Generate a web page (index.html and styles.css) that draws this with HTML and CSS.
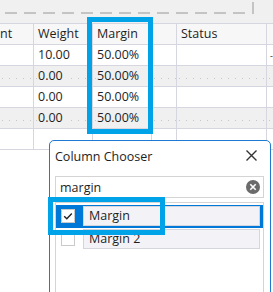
FILE: index.html
```html
<!DOCTYPE html>
<html lang="en">
<head>
  <meta charset="UTF-8" />
  <title>Column Chooser</title>
  <link rel="stylesheet" href="styles.css">
</head>
<body>
  <div class="screen">

    <div class="group-bar">
      <svg class="group-drop" width="273" height="23" viewBox="0 0 273 23">
        <path d="M-4 13 H253 V-2" fill="none" stroke="#c4c4c4" stroke-width="2" stroke-dasharray="12 7" stroke-dashoffset="-9" />
      </svg>
    </div>

    <div class="grid">
      <div class="row head">
        <div class="cell">nt</div>
        <div class="cell">Weight</div>
        <div class="cell">Margin</div>
        <div class="cell"></div>
        <div class="cell">Status</div>
        <div class="cell last"></div>
      </div>
      <div class="row">
        <div class="cell"></div>
        <div class="cell"><span>10.00</span></div>
        <div class="cell"><span>50.00%</span></div>
        <div class="cell"></div>
        <div class="cell"></div>
        <div class="cell last"><span class="tick">-</span></div>
      </div>
      <div class="row alt">
        <div class="cell"></div>
        <div class="cell"><span>0.00</span></div>
        <div class="cell"><span>50.00%</span></div>
        <div class="cell"></div>
        <div class="cell"></div>
        <div class="cell last"></div>
      </div>
      <div class="row">
        <div class="cell"></div>
        <div class="cell"><span>0.00</span></div>
        <div class="cell"><span>50.00%</span></div>
        <div class="cell"></div>
        <div class="cell"></div>
        <div class="cell last"></div>
      </div>
      <div class="row alt">
        <div class="cell"></div>
        <div class="cell"><span>0.00</span></div>
        <div class="cell"><span>50.00%</span></div>
        <div class="cell"></div>
        <div class="cell"></div>
        <div class="cell last"></div>
      </div>
      <div class="row">
        <div class="cell"></div>
        <div class="cell"></div>
        <div class="cell"></div>
        <div class="cell"></div>
        <div class="cell"></div>
        <div class="cell last"></div>
      </div>
    </div>

    <!-- column highlight -->
    <div class="mark mark-col"></div>

    <div class="chooser">
      <div class="chooser-title">
        <span>Column Chooser</span>
        <svg class="close" width="11" height="11" viewBox="0 0 11 11">
          <path d="M0.5 0.5 L10.5 10.5 M10.5 0.5 L0.5 10.5" stroke="#333" stroke-width="1.4" />
        </svg>
      </div>

      <div class="search">
        <span class="search-text">margin</span>
        <svg class="clear" width="14" height="14" viewBox="0 0 14 14">
          <circle cx="7" cy="7" r="7" fill="#6b6b6b" />
          <path d="M4.3 4.3 L9.7 9.7 M9.7 4.3 L4.3 9.7" stroke="#fff" stroke-width="1.6" />
        </svg>
      </div>

      <div class="col-list">
        <div class="col-item selected">
          <div class="check-area">
            <span class="checkbox">
              <svg width="12" height="12" viewBox="0 0 12 12">
                <path d="M2.2 6.2 L4.8 8.8 L9.8 3.4" fill="none" stroke="#222" stroke-width="1.4" />
              </svg>
            </span>
          </div>
          <div class="col-name">Margin</div>
        </div>
        <div class="col-item">
          <div class="check-area">
            <span class="checkbox"></span>
          </div>
          <div class="col-name">Margin 2</div>
        </div>
      </div>
    </div>

    <!-- item highlight -->
    <div class="mark mark-item"></div>

  </div>
</body>
</html>
```

FILE: styles.css
```css
body {
  margin: 0;
  font-family: "Open Sans", "Noto Sans", sans-serif;
  font-size: 12.5px;
  color: #1e1e1e;
}

.screen {
  position: relative;
  width: 273px;
  height: 292px;
  overflow: hidden;
  background: #fff;
}

.group-bar {
  height: 23px;
  background: #f0f0f0;
}

.group-drop {
  display: block;
}

/* grid */
.grid {
  border-top: 1px solid #d6d6e0;
}

.row {
  display: grid;
  grid-template-columns: 34px 59px 59px 25px 90px 1fr;
  height: 21px;
}

.cell {
  box-sizing: border-box;
  height: 21px;
  padding-left: 4px;
  line-height: 20px;
  border-right: 1px solid #d6d6e0;
  border-bottom: 1px solid #d6d6e0;
  white-space: nowrap;
  overflow: hidden;
}

.cell.last {
  border-right: none;
}

.row.head .cell {
  background: #f7f7f7;
}

.row.head .cell:first-child {
  padding-left: 0;
}

.row.alt .cell {
  background-color: #f0f0f0;
  background-image: repeating-linear-gradient(90deg, #c6c6c6 0 1px, transparent 1px 7px);
  background-size: 100% 1px;
  background-repeat: no-repeat;
  background-position: 2px 12px;
}

.row.alt .cell span {
  display: inline-block;
  background: #f0f0f0;
  padding-right: 8px;
}

.tick {
  display: inline-block;
  font-size: 9px;
  line-height: 12px;
  margin-left: -1px;
}

/* annotation boxes */
.mark {
  position: absolute;
  box-sizing: border-box;
  border: 5px solid #00a2e8;
  pointer-events: none;
}

.mark-col {
  left: 87px;
  top: 17px;
  width: 66px;
  height: 117px;
}

.mark-item {
  left: 48px;
  top: 197px;
  width: 117px;
  height: 38px;
}

/* column chooser popup */
.chooser {
  position: absolute;
  left: 49px;
  top: 140px;
  width: 222px;
  height: 170px;
  box-sizing: border-box;
  padding: 0 6px 0 5px;
  background: #fff;
  border: 1px solid #1f7ad2;
  border-radius: 5px 5px 0 0;
}

.chooser-title {
  display: flex;
  align-items: center;
  justify-content: space-between;
  height: 28px;
  padding: 0 7px 0 0;
  margin-bottom: 7px;
}

.chooser-title span {
  padding-top: 2px;
}

.search {
  display: flex;
  align-items: center;
  justify-content: space-between;
  box-sizing: border-box;
  height: 22px;
  padding: 0 3px 0 4px;
  border: 1px solid #d4d4d4;
}

.clear {
  display: block;
}

.col-list {
  margin-top: 4px;
  height: 120px;
  padding-top: 2px;
  border: 1px solid #d4d4d4;
}

.col-item {
  display: flex;
  height: 23px;
  box-sizing: border-box;
  padding: 1px 3px 2px 0;
}

.col-item.selected {
  background: #0078d7;
}

.check-area {
  width: 27px;
  display: flex;
  align-items: center;
  padding-left: 5px;
  box-sizing: border-box;
}

.checkbox {
  display: flex;
  align-items: center;
  justify-content: center;
  width: 14px;
  height: 14px;
  box-sizing: border-box;
  background: #fff;
  border: 1px solid #cacaca;
}

.col-name {
  flex: 1;
  box-sizing: border-box;
  height: 20px;
  line-height: 18px;
  padding-left: 5px;
  background: #f3f3f7;
  border: 1px solid #d5d5de;
}
```
